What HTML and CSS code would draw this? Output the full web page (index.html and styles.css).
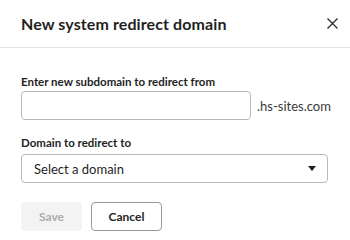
FILE: index.html
```html
<!DOCTYPE html>
<html>
<head>
    <title>New system redirect domain</title>
    <link rel="stylesheet" href="styles.css">
</head>
<body>
    <div class="dialog">
        <div class="dialog-header">
            <h1 class="dialog-title">New system redirect domain</h1>
            <button type="button" class="close-btn" aria-label="Close">
                <svg width="11" height="11" viewBox="0 0 11 11">
                    <path d="M0.5 0.5 L10.5 10.5 M10.5 0.5 L0.5 10.5" stroke="#2e2e2e" stroke-width="1.3" fill="none"/>
                </svg>
            </button>
        </div>

        <div class="dialog-body">
            <div class="field">
                <label for="subdomain">Enter new subdomain to redirect from</label>
                <div class="input-row">
                    <input type="text" id="subdomain" class="text-input">
                    <span class="suffix">.hs-sites.com</span>
                </div>
            </div>

            <div class="field">
                <label for="domain" class="select-label">Domain to redirect to</label>
                <div class="select-box" id="domain">
                    <span>Select a domain</span>
                    <span class="caret"></span>
                </div>
            </div>

            <div class="actions">
                <button type="button" class="btn btn-save" disabled>Save</button>
                <button type="button" class="btn btn-cancel">Cancel</button>
            </div>
        </div>
    </div>
</body>
</html>
```

FILE: styles.css
```css
* {
    box-sizing: border-box;
}

body {
    margin: 0;
    font-family: Lato, Arial, sans-serif;
    color: #1f1f1f;
    background-color: #fff;
}

.dialog {
    width: 350px;
    height: 240px;
    overflow: hidden;
}

.dialog-header {
    display: flex;
    align-items: center;
    justify-content: space-between;
    height: 48px;
    padding: 0 12px 0 21px;
    border-bottom: 1px solid #e3e3e3;
}

.dialog-title {
    margin: 0;
    font-size: 16px;
    line-height: 20px;
    font-weight: 700;
    letter-spacing: 0.1px;
}

.close-btn {
    background: none;
    border: none;
    padding: 0;
    width: 11px;
    height: 11px;
    display: flex;
}

.dialog-body {
    padding: 26px 21px 0 21px;
}

.field {
    margin-bottom: 15px;
}

label {
    display: block;
    font-size: 11.5px;
    font-weight: 700;
    line-height: 16px;
    margin-bottom: 1px;
}

.select-label {
    margin-bottom: 3px;
}

.input-row {
    display: flex;
    align-items: center;
}

.text-input {
    flex-shrink: 0;
    width: 230px;
    height: 29px;
    border: 1px solid #b8b8b8;
    border-radius: 4px;
    padding: 0 10px;
}

.suffix {
    margin-left: 6px;
    font-size: 13px;
    line-height: 16px;
    color: #3a3a3a;
    white-space: nowrap;
}

.select-box {
    display: flex;
    align-items: center;
    justify-content: space-between;
    width: 307px;
    height: 29px;
    border: 1px solid #b8b8b8;
    border-radius: 4px;
    padding: 0 11px 0 12px;
    font-size: 13px;
    line-height: 16px;
}

.caret {
    width: 0;
    height: 0;
    border-left: 4px solid transparent;
    border-right: 4px solid transparent;
    border-top: 5px solid #1f1f1f;
}

.actions {
    display: flex;
    gap: 9px;
    margin-top: 19px;
}

.btn {
    height: 29px;
    border-radius: 4px;
    font-family: inherit;
    font-size: 12px;
    font-weight: 700;
    line-height: 16px;
}

.btn-save {
    width: 61px;
    background-color: #f3f3f3;
    border: none;
    color: #ababab;
}

.btn-cancel {
    width: 71px;
    background-color: #fff;
    border: 1px solid #9a9a9a;
    color: #1f1f1f;
}
```
